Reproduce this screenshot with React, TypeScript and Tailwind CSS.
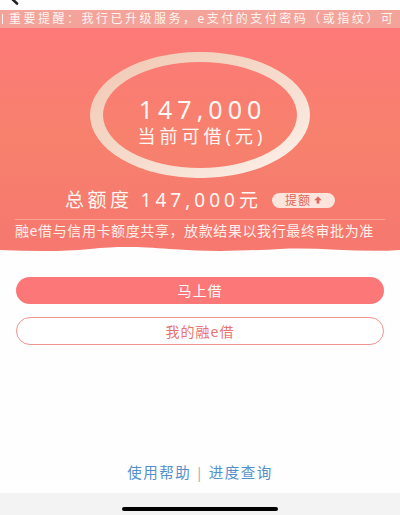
import React from "react";

const Ring = () => (
  <svg className="absolute inset-0" width="220" height="126" viewBox="0 0 220 126">
    <defs>
      <linearGradient id="ringGrad" x1="0" y1="0" x2="1" y2="1">
        <stop offset="0%" stopColor="#f1c8b2" />
        <stop offset="55%" stopColor="#f6dccd" />
        <stop offset="100%" stopColor="#fdf3ed" />
      </linearGradient>
    </defs>
    <path
      fillRule="evenodd"
      fill="url(#ringGrad)"
      d="M0,63 a110,63 0 1,0 220,0 a110,63 0 1,0 -220,0 Z M13,63 a97,53 0 1,0 194,0 a97,53 0 1,0 -194,0 Z"
    />
  </svg>
);

const UpArrow = () => (
  <svg width="8" height="8" viewBox="0 0 8 8" className="ml-[3px]">
    <path d="M4 0.5 L7.8 4.2 L5.4 4.2 L5.4 7.5 L2.6 7.5 L2.6 4.2 L0.2 4.2 Z" fill="#e0675d" />
  </svg>
);

const App = () => {
  return (
    <div className="w-[400px] h-[515px] flex flex-col bg-[#fefefe] overflow-hidden font-['Noto_Sans','Noto_Sans_CJK_SC',sans-serif]">
      {/* status / back */}
      <div className="h-[10px] relative">
        <svg className="absolute left-0 top-0" width="30" height="10" viewBox="0 0 30 10">
          <path d="M10 -3 L17 3.5" stroke="#222" strokeWidth="2.6" strokeLinecap="round" />
        </svg>
      </div>

      {/* notice */}
      <div className="h-[18px] bg-[#f4a39a] flex items-center whitespace-nowrap overflow-hidden text-[12px] leading-[18px] text-[#fff5f2] tracking-[2.5px]">
        <span className="ml-[2px] mr-[6px] w-[1px] h-[10px] bg-[#fff5f2]" />
        <span>重要提醒：我行已升级服务，e支付的支付密码（或指纹）可</span>
      </div>

      {/* header panel */}
      <div className="flex flex-col">
        <div className="flex flex-col items-center pt-[24px] pb-[8px] bg-gradient-to-b from-[#fd7978] via-[#f7816d] to-[#f6786f] text-[#fff8f4]">
          <div className="relative w-[220px] h-[126px] flex flex-col items-center pt-[43px]">
            <Ring />
            <div className="relative text-[25px] leading-[28px] tracking-[5px] pl-[5px]">147,000</div>
            <div className="relative mt-[3px] text-[18px] leading-[20px] tracking-[4px] pl-[4px]">当前可借(元)</div>
          </div>

          <div className="mt-[12px] h-[20px] flex items-center">
            <span className="text-[19px] leading-[20px] tracking-[3.5px]">总额度</span>
            <span className="ml-[8px] text-[19px] leading-[20px] tracking-[4px]">147,000元</span>
            <span className="ml-[10px] h-[15px] w-[63px] rounded-full bg-[#fde5de] flex items-center justify-center text-[12px] leading-[15px] tracking-[1px] text-[#e0675d]">
              提额
              <UpArrow />
            </span>
          </div>

          <div className="mt-[9px] w-[370px] border-t border-[#f9a397]" />

          <div className="mt-[4px] w-[370px] text-[14px] leading-[14px] tracking-[0.6px] text-[#fff0ea] whitespace-nowrap">
            融e借与信用卡额度共享，放款结果以我行最终审批为准
          </div>
        </div>
        <svg width="400" height="7" viewBox="0 0 400 7" className="block">
          <path
            d="M0 0 L400 0 L400 4 C360 7 320 1 280 3 C240 5 210 6 170 3 C140 1 120 0 90 3 C60 6 30 5 0 4 Z"
            fill="#f6786f"
          />
        </svg>
      </div>

      {/* buttons */}
      <div className="flex flex-col px-[16px] pt-[24px] gap-[13px]">
        <button className="h-[27px] rounded-full bg-[#fc7878] text-white text-[14px] tracking-[1px]">马上借</button>
        <button className="h-[28px] rounded-full border border-[#f19390] bg-white text-[#e8736f] text-[14px] tracking-[1px]">
          我的融e借
        </button>
      </div>

      <div className="flex-1" />

      {/* footer links */}
      <div className="flex items-center justify-center h-[20px] mb-[10px] text-[14.5px] tracking-[1.5px] text-[#5290cb]">
        <span>使用帮助</span>
        <span className="mx-[4px] text-[#b0b0b0]">|</span>
        <span>进度查询</span>
      </div>

      {/* home indicator area */}
      <div className="h-[22px] bg-[#f3f3f3] flex justify-center pt-[14px]">
        <div className="w-[156px] h-[4px] rounded-full bg-black" />
      </div>
    </div>
  );
};

export default App;
